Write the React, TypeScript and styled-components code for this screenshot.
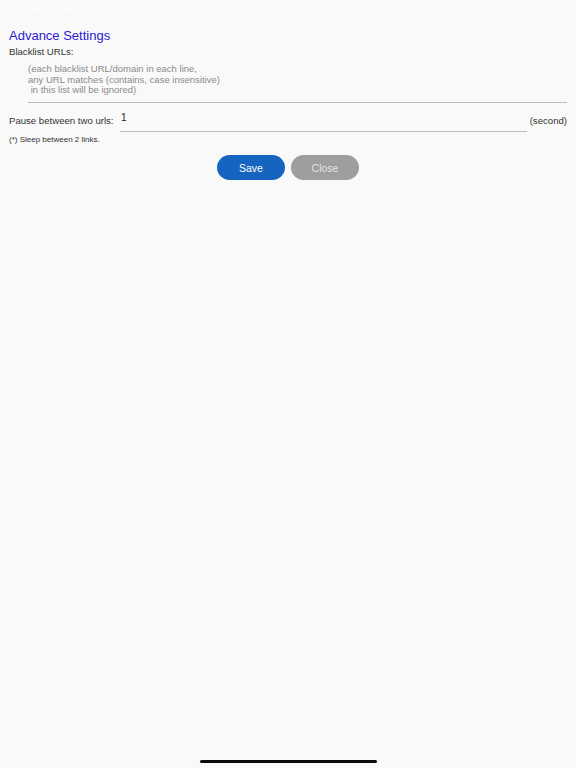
import React from "react";
import styled, { createGlobalStyle } from "styled-components";

const GlobalStyle = createGlobalStyle`
  html, body {
    margin: 0;
    padding: 0;
    background: #f9f9f9;
  }
  body {
    font-family: "Liberation Sans", Arial, sans-serif;
  }
`;

const Screen = styled.div`
  position: relative;
  width: 576px;
  height: 768px;
  background: #f9f9f9;
  overflow: hidden;
`;

const StatusBar = styled.div`
  height: 16px;
  display: flex;
  justify-content: space-between;
  align-items: center;
  padding: 0 12px 0 16px;
  color: #ffffff;
  font-size: 8px;
`;

const Content = styled.div`
  display: flex;
  flex-direction: column;
  padding: 12px 9px 0 9px;
`;

const Title = styled.h1`
  margin: 0;
  font-size: 13px;
  font-weight: normal;
  color: #2a22d0;
  line-height: 16px;
`;

const Label = styled.div`
  font-size: 9.6px;
  color: #333333;
  line-height: 14px;
`;

const BlacklistLabel = styled(Label)`
  margin-top: 1px;
`;

const BlacklistArea = styled.div`
  margin: 5px 0 0 19px;
  padding: 0 0 6px 0;
  border-bottom: 1px solid #bcbcbc;
  font-size: 9.5px;
  line-height: 10.7px;
  color: #8a8a8a;
  white-space: pre;
`;

const PauseRow = styled.div`
  display: flex;
  align-items: flex-start;
  margin-top: 7px;
`;

const PauseLabel = styled(Label)`
  padding-top: 4px;
  width: 111px;
  flex-shrink: 0;
`;

const PauseInput = styled.div`
  flex: 1;
  height: 22px;
  border-bottom: 1px solid #bcbcbc;
  font-size: 10px;
  color: #222222;
  padding: 2px 0 0 1px;
  box-sizing: border-box;
`;

const Unit = styled(Label)`
  padding: 4px 0 0 3px;
`;

const Note = styled.div`
  margin-top: 3px;
  font-size: 8px;
  color: #333333;
  line-height: 10px;
`;

const ButtonRow = styled.div`
  display: flex;
  justify-content: center;
  gap: 6px;
  margin-top: 10px;
`;

const Button = styled.button<{ $primary?: boolean }>`
  width: 68px;
  height: 25px;
  border: none;
  border-radius: 13px;
  font-family: inherit;
  font-size: 10.5px;
  background: ${({ $primary }) => ($primary ? "#1565c0" : "#9e9e9e")};
  color: ${({ $primary }) => ($primary ? "#ffffff" : "#e4e4e4")};
  padding: 0;
`;

const HomeIndicator = styled.div`
  position: absolute;
  left: 200px;
  bottom: 5px;
  width: 177px;
  height: 3px;
  border-radius: 2px;
  background: #0a0a0a;
`;

export default function App() {
  return (
    <Screen>
      <GlobalStyle />
      <StatusBar>
        <span>9:41 AM Tue Jan 9</span>
        <span>100%</span>
      </StatusBar>
      <Content>
        <Title>Advance Settings</Title>
        <BlacklistLabel>Blacklist URLs:</BlacklistLabel>
        <BlacklistArea>
          {"(each blacklist URL/domain in each line,\nany URL matches (contains, case insensitive)\n in this list will be ignored)"}
        </BlacklistArea>
        <PauseRow>
          <PauseLabel>Pause between two urls:</PauseLabel>
          <PauseInput>1</PauseInput>
          <Unit>(second)</Unit>
        </PauseRow>
        <Note>(*) Sleep between 2 links.</Note>
        <ButtonRow>
          <Button $primary>Save</Button>
          <Button>Close</Button>
        </ButtonRow>
      </Content>
      <HomeIndicator />
    </Screen>
  );
}
